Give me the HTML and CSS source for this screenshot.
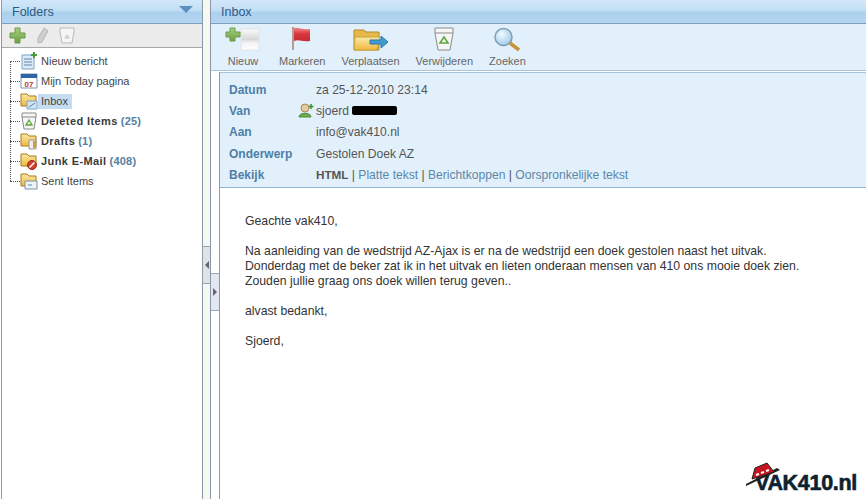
FILE: index.html
```html
<!DOCTYPE html>
<html lang="en">

<head>
    <meta charset="UTF-8">
    <title>Inbox</title>
    <link rel="stylesheet" href="styles.css">
</head>

<body>
    <svg class="defs" width="0" height="0">
        <defs>
            <linearGradient id="flagRed" x1="0" y1="0" x2="0" y2="1">
                <stop offset="0" stop-color="#f0888a"/>
                <stop offset="0.45" stop-color="#d8383c"/>
                <stop offset="1" stop-color="#c42a30"/>
            </linearGradient>
            <linearGradient id="folderYellow" x1="0" y1="0" x2="0" y2="1">
                <stop offset="0" stop-color="#fbe9a8"/>
                <stop offset="1" stop-color="#eeb93f"/>
            </linearGradient>
            <linearGradient id="pageGrey" x1="0" y1="0" x2="0" y2="1">
                <stop offset="0" stop-color="#fbfbfb"/>
                <stop offset="0.5" stop-color="#d8d8d8"/>
                <stop offset="0.65" stop-color="#f2f2f2"/>
                <stop offset="1" stop-color="#fff"/>
            </linearGradient>
            <linearGradient id="plusGreen" x1="0" y1="0" x2="0" y2="1">
                <stop offset="0" stop-color="#a6d07e"/>
                <stop offset="1" stop-color="#6d9f46"/>
            </linearGradient>
            <radialGradient id="lensBlue" cx="0.4" cy="0.35" r="0.7">
                <stop offset="0" stop-color="#f2fafe"/>
                <stop offset="1" stop-color="#9ccbe6"/>
            </radialGradient>
        </defs>
    </svg>

    <div class="app">
        <div class="folders">
            <div class="pane-title">
                <span>Folders</span>
                <svg class="title-arrow" width="14" height="7" viewBox="0 0 14 7"><path d="M0 0H14L7 7Z" fill="#5d8fc0"/></svg>
            </div>
            <div class="folder-tools">
                <svg width="17" height="17" viewBox="0 0 17 17"><path d="M6 1h5v5h5v5h-5v5H6v-5H1V6h5z" fill="url(#plusGreen)" stroke="#6a9a45"/></svg>
                <svg width="13" height="17" viewBox="0 0 13 17"><path d="M8 1l4 3-6 11-4 1 0-5z" fill="#cfcfcf" stroke="#b5b5b5"/></svg>
                <svg width="16" height="17" viewBox="0 0 16 17"><path d="M1 1h14v4l-2 11H3L1 5z" fill="#f5f5f5" stroke="#b8b8b8"/><path d="M8 8l2 3H6z" fill="none" stroke="#bbb"/></svg>
            </div>
            <ul class="tree">
                <li>
                    <svg class="node-icon" width="18" height="18" viewBox="0 0 18 18"><path d="M2 3h12v14H2z" fill="#dcebf7" stroke="#7ba4c6"/><path d="M4 7h8M4 10h8M4 13h8" stroke="#5c87aa"/><path d="M14 0v6M11 3h6" stroke="#4c9a3a" stroke-width="2"/></svg>
                    <span>Nieuw bericht</span>
                </li>
                <li>
                    <svg class="node-icon" width="18" height="18" viewBox="0 0 18 18"><path d="M1 2h16v14H1z" fill="#fff" stroke="#7c93ac"/><path d="M1 2h16v4H1z" fill="#2f66a8"/><text x="9" y="15" class="cal-day">07</text></svg>
                    <span>Mijn Today pagina</span>
                </li>
                <li>
                    <svg class="node-icon" width="18" height="18" viewBox="0 0 18 18"><path d="M1 2h6l2 2h7v10H1z" fill="url(#folderYellow)" stroke="#a77b1f"/><path d="M7 9h10v8H7z" fill="#cfe3f5" stroke="#7ba4c6"/><path d="M9 15l6-4" stroke="#5c87aa"/></svg>
                    <span class="selected">Inbox</span>
                </li>
                <li>
                    <svg class="node-icon" width="18" height="18" viewBox="0 0 18 18"><path d="M2 1h14v4l-2 12H4L2 5z" fill="#f6f6f6" stroke="#8a8a8a"/><path d="M2 5h14" stroke="#8a8a8a"/><path d="M9 8l3 5H6z" fill="none" stroke="#5fa83e" stroke-width="1.4"/></svg>
                    <span><b>Deleted Items</b> <em>(25)</em></span>
                </li>
                <li>
                    <svg class="node-icon" width="18" height="18" viewBox="0 0 18 18"><path d="M1 2h6l2 2h7v10H1z" fill="url(#folderYellow)" stroke="#a77b1f"/><path d="M9 8h7v9H9z" fill="#eee" stroke="#999"/><path d="M13 9h3v7h-3z" fill="#d99a3a"/></svg>
                    <span><b>Drafts</b> <em>(1)</em></span>
                </li>
                <li>
                    <svg class="node-icon" width="18" height="18" viewBox="0 0 18 18"><path d="M1 2h6l2 2h7v10H1z" fill="url(#folderYellow)" stroke="#a77b1f"/><circle cx="12" cy="13" r="4.500" fill="#d2402c" stroke="#8f2418"/><path d="M9.500 15.500l5-5" stroke="#fff" stroke-width="1.400"/></svg>
                    <span><b>Junk E-Mail</b> <em>(408)</em></span>
                </li>
                <li>
                    <svg class="node-icon" width="18" height="18" viewBox="0 0 18 18"><path d="M1 2h6l2 2h7v10H1z" fill="url(#folderYellow)" stroke="#a77b1f"/><path d="M5 9h12v8H5z" fill="#eef3f8" stroke="#7b93a8"/><path d="M8 13h4" stroke="#5c87aa"/></svg>
                    <span>Sent Items</span>
                </li>
            </ul>
        </div>

        <div class="splitter">
            <div class="grip grip-left"><i class="tri-left"></i></div>
            <div class="grip grip-right"><i class="tri-right"></i></div>
        </div>

        <div class="main">
            <div class="pane-title">
                <span>Inbox</span>
            </div>
            <div class="toolbar">
                <div class="tool tool-new">
                    <svg width="36" height="26" viewBox="0 0 36 26"><path d="M16 3h18v21H16z" fill="url(#pageGrey)" stroke="#dfe3e6"/><path d="M5 2h5v4h5v5h-5v4H5v-4H1V6h4z" fill="url(#plusGreen)" stroke="#6a9a45"/></svg>
                    <span>Nieuw</span>
                </div>
                <div class="tool">
                    <svg width="24" height="26" viewBox="0 0 24 26"><path d="M3 1v23" stroke="#b89a90" stroke-width="2"/><path d="M4 2c5-1 8 2 16 1v12c-8 1-11-2-16 0z" fill="url(#flagRed)"/></svg>
                    <span>Markeren</span>
                </div>
                <div class="tool">
                    <svg width="36" height="26" viewBox="0 0 36 26"><path d="M1 4h10l2 2h13v18H1z" fill="#e6b94a" stroke="#b28a2a"/><path d="M2 11h25l-3 13H1z" fill="url(#folderYellow)" stroke="#c9a23e"/><path d="M17 14h11v-4l7 6-7 6v-4H17z" fill="#3f9bd0" stroke="#2f7aa8"/></svg>
                    <span>Verplaatsen</span>
                </div>
                <div class="tool">
                    <svg width="22" height="26" viewBox="0 0 22 26"><path d="M2 2h18v5l-3 17H5L2 7z" fill="#f6f6f6" stroke="#8a8a8a"/><path d="M2 7h18" stroke="#8a8a8a"/><path d="M11 11l4 6H7z" fill="none" stroke="#5fa83e" stroke-width="1.600"/></svg>
                    <span>Verwijderen</span>
                </div>
                <div class="tool">
                    <svg width="28" height="26" viewBox="0 0 28 26"><circle cx="10.500" cy="11" r="8.500" fill="url(#lensBlue)" stroke="#7c9db5" stroke-width="1.500"/><path d="M17 17l9 7" stroke="#c9943c" stroke-width="3.500"/></svg>
                    <span>Zoeken</span>
                </div>
            </div>

            <div class="message">
                <div class="headers">
                    <div class="header-row">
                        <label>Datum</label>
                        <span>za 25-12-2010 23:14</span>
                    </div>
                    <div class="header-row">
                        <label>Van</label>
                        <span class="sender">
                            <svg class="add-contact" width="16" height="15" viewBox="0 0 16 15"><circle cx="7" cy="5" r="4" fill="#e8c9a0" stroke="#a58a60"/><path d="M1 14c0-5 12-5 12 0z" fill="#6fae4e" stroke="#4f8a35"/><path d="M13 1v5M10.500 3.500h5" stroke="#3f8f2e" stroke-width="1.500"/></svg>
                            sjoerd <i class="redacted"></i>
                        </span>
                    </div>
                    <div class="header-row">
                        <label>Aan</label>
                        <span>info@vak410.nl</span>
                    </div>
                    <div class="header-row">
                        <label>Onderwerp</label>
                        <span>Gestolen Doek AZ</span>
                    </div>
                    <div class="header-row">
                        <label>Bekijk</label>
                        <span class="views"><b>HTML</b> | <a>Platte tekst</a> | <a>Berichtkoppen</a> | <a>Oorspronkelijke tekst</a></span>
                    </div>
                </div>
                <div class="body-text">
                    <p>Geachte vak410,</p>
                    <p>Na aanleiding van de wedstrijd AZ-Ajax is er na de wedstrijd een doek gestolen naast het uitvak.<br>
                    Donderdag met de beker zat ik in het uitvak en lieten onderaan mensen van 410 ons mooie doek zien.<br>
                    Zouden jullie graag ons doek willen terug geven..</p>
                    <p>alvast bedankt,</p>
                    <p>Sjoerd,</p>
                </div>
            </div>
        </div>
    </div>

    <div class="watermark">
        <svg class="hat" width="36" height="26" viewBox="0 0 36 26"><path d="M1 24L35 8l-3-2L1 22z" fill="#222"/><path d="M7 17L10 6l12-5 7 9z" fill="#c8141e" stroke="#222"/><path d="M11 13l3-1M16 11l3-1M21 9l3-1" stroke="#fff" stroke-width="2"/></svg>
        <span>VAK410.nl</span>
    </div>
</body>

</html>
```

FILE: styles.css
```css
html, body {
    margin: 0;
    padding: 0;
    height: 100%;
    overflow: hidden;
}

body {
    position: relative;
    font-family: "Liberation Sans", Arial, sans-serif;
    font-size: 11px;
    color: #444;
    background-color: #fff;
}

.defs {
    position: absolute;
}

.app {
    display: flex;
    width: 866px;
    height: 499px;
}

.folders {
    width: 200px;
    margin-left: 1px;
    border-left: 1px solid #8b9aa8;
    border-right: 1px solid #8b9aa8;
    flex: none;
}

.pane-title {
    height: 23px;
    padding-left: 10px;
    display: flex;
    align-items: center;
    justify-content: space-between;
    font-size: 12.5px;
    color: #2a5a85;
    background: linear-gradient(#d2e8f9 0%, #c2dff5 45%, #abd0ef 55%, #b4d6f1 100%);
    border-bottom: 1px solid #7f9fb8;
}

.title-arrow {
    margin-right: 9px;
    margin-bottom: 4px;
}

.folder-tools {
    height: 23px;
    padding-left: 7px;
    display: flex;
    align-items: center;
    gap: 10px;
    background-color: #ececec;
    border-bottom: 1px solid #a9a9a9;
}

.tree {
    list-style: none;
    margin: 0;
    padding: 3px 0 0 8px;
    position: relative;
}

.tree::before {
    content: "";
    position: absolute;
    left: 8px;
    top: 13px;
    height: 120px;
    border-left: 1px dotted #555;
}

.tree li {
    height: 20px;
    display: flex;
    align-items: center;
    padding-left: 10px;
    position: relative;
    white-space: nowrap;
    font-size: 11px;
    color: #444;
}

.tree li::before {
    content: "";
    position: absolute;
    left: 0;
    width: 10px;
    border-top: 1px dotted #555;
}

.tree li span {
    padding: 1.5px 4px 1.5px 3px;
}

.tree b {
    color: #3a3a3a;
    letter-spacing: 0.4px;
}

.tree em {
    font-style: normal;
    font-weight: bold;
    color: #55809f;
    letter-spacing: 0.2px;
}

.tree .selected {
    background-color: #c6dcf0;
}

.cal-day {
    font-family: "Liberation Sans", Arial, sans-serif;
    font-size: 8px;
    font-weight: bold;
    fill: #c0392b;
    text-anchor: middle;
}

.splitter {
    width: 7px;
    flex: none;
    position: relative;
    background-color: #f7f8f2;
}

.grip {
    position: absolute;
    box-sizing: border-box;
    height: 38px;
    border-top: 1px solid #9aa;
    border-bottom: 1px solid #9aa;
    display: flex;
    align-items: center;
    justify-content: center;
}

.grip-left {
    left: 0;
    width: 7px;
    top: 246px;
    background-color: #dfe3e6;
}

.grip-right {
    left: 8px;
    width: 8px;
    top: 273px;
    background-color: #e3e7f2;
}

.tri-left {
    border-right: 4px solid #666;
    border-top: 4px solid transparent;
    border-bottom: 4px solid transparent;
}

.tri-right {
    border-left: 4px solid #666;
    border-top: 4px solid transparent;
    border-bottom: 4px solid transparent;
}

.main {
    flex: 1;
    border-left: 1px solid #8b93ad;
    display: flex;
    flex-direction: column;
    min-width: 0;
}

.toolbar {
    box-sizing: border-box;
    height: 47px;
    padding: 2px 0 0 14px;
    display: flex;
    gap: 16px;
    background-color: #e2f0fb;
    border-bottom: 1px solid #a6c4da;
}

.tool {
    display: flex;
    flex-direction: column;
    align-items: center;
    gap: 3px;
    font-size: 11px;
    color: #666;
}

.tool-new {
    margin-right: 2px;
}

.message {
    flex: 1;
    margin-left: 8px;
    margin-top: 1px;
    border-left: 1px solid #8b9aa8;
    border-top: 1px solid #a6c4da;
    display: flex;
    flex-direction: column;
}

.headers {
    flex: none;
    height: 115px;
    padding: 6px 0 0 9px;
    box-sizing: border-box;
    background-color: #e2f0fb;
    border-bottom: 1px solid #8fb3d0;
}

.header-row {
    display: flex;
    height: 21.3px;
    align-items: center;
    font-size: 12.1px;
    color: #555;
}

.header-row label {
    width: 87px;
    font-size: 12px;
    font-weight: bold;
    color: #4f7fa6;
}

.views b {
    font-size: 11.7px;
}

.sender {
    position: relative;
}

.add-contact {
    position: absolute;
    left: -18px;
    top: -1px;
}

.redacted {
    display: inline-block;
    width: 45px;
    height: 9px;
    background-color: #000;
    border-radius: 2px;
}

.views a {
    color: #5b87a8;
}

.body-text {
    padding: 26px 0 0 25px;
    font-size: 12.25px;
    line-height: 15px;
    color: #333;
}

.body-text p {
    margin: 0 0 15px;
}

.watermark {
    position: absolute;
    right: 9px;
    bottom: 3px;
    font-weight: bold;
    font-size: 21.5px;
    letter-spacing: -0.3px;
    color: #0d2230;
    -webkit-text-stroke: 0.6px #0d2230;
}

.hat {
    position: absolute;
    left: -10px;
    top: -9px;
}
```
